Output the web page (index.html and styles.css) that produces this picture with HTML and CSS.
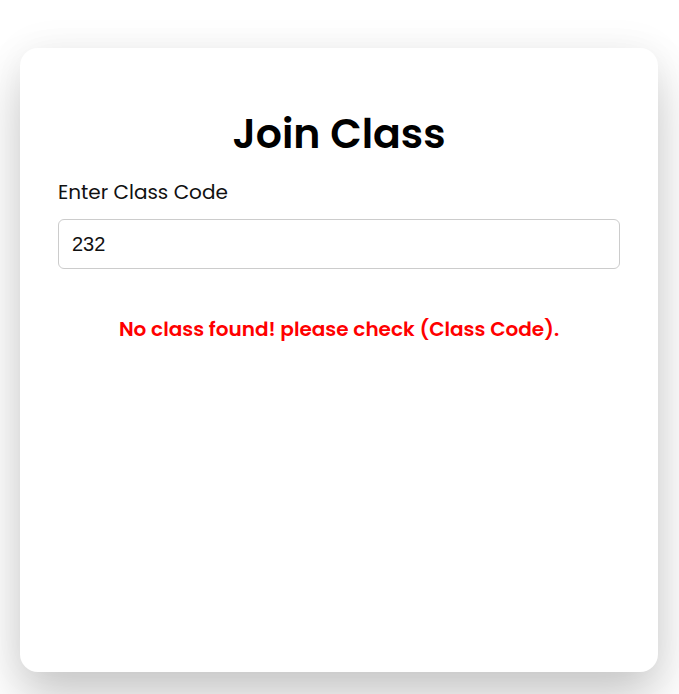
FILE: index.html
```html
<!DOCTYPE html>
<html lang="en">
<head>
<meta charset="utf-8">
<title>Join Class</title>
<link rel="stylesheet" href="styles.css">
</head>
<body>
<main class="page">
  <section class="card">
    <h1 class="title">Join Class</h1>
    <label class="label" for="code">Enter Class Code</label>
    <input class="input" id="code" type="text" value="232">
    <p class="error">No class found! please check (Class Code).</p>
  </section>
</main>
</body>
</html>
```
FILE: styles.css
```css
* { box-sizing: border-box; }
html, body { margin: 0; padding: 0; background: #ffffff; }
body {
  font-family: Poppins, Inter, "Open Sans", sans-serif;
  color: #111;
}
.page {
  padding: 48px 21px 22px 20px;
}
.card {
  background: #fff;
  border-radius: 18px;
  height: 624px;
  padding: 60px 38px 0 38px;
  display: flex;
  flex-direction: column;
  box-shadow: 0 28px 50px rgba(0,0,0,0.2), 0 0 40px rgba(0,0,0,0.05);
}
.title {
  margin: 0 0 18px 0;
  text-align: center;
  font-size: 41px;
  font-weight: 600;
  line-height: 52px;
  color: #000;
}
.label {
  font-size: 20px;
  line-height: 28px;
  color: #111;
  margin-bottom: 13px;
}
.input {
  width: 100%;
  height: 50px;
  border: 1px solid #ccc;
  border-radius: 6px;
  padding: 0 13px;
  font-family: "Liberation Sans", Arial, sans-serif;
  font-size: 20px;
  color: #111;
  outline: none;
}
.error {
  margin: 46px 0 0 0;
  text-align: center;
  color: #ff0000;
  font-size: 20px;
  font-weight: 600;
  line-height: 28px;
}
```
